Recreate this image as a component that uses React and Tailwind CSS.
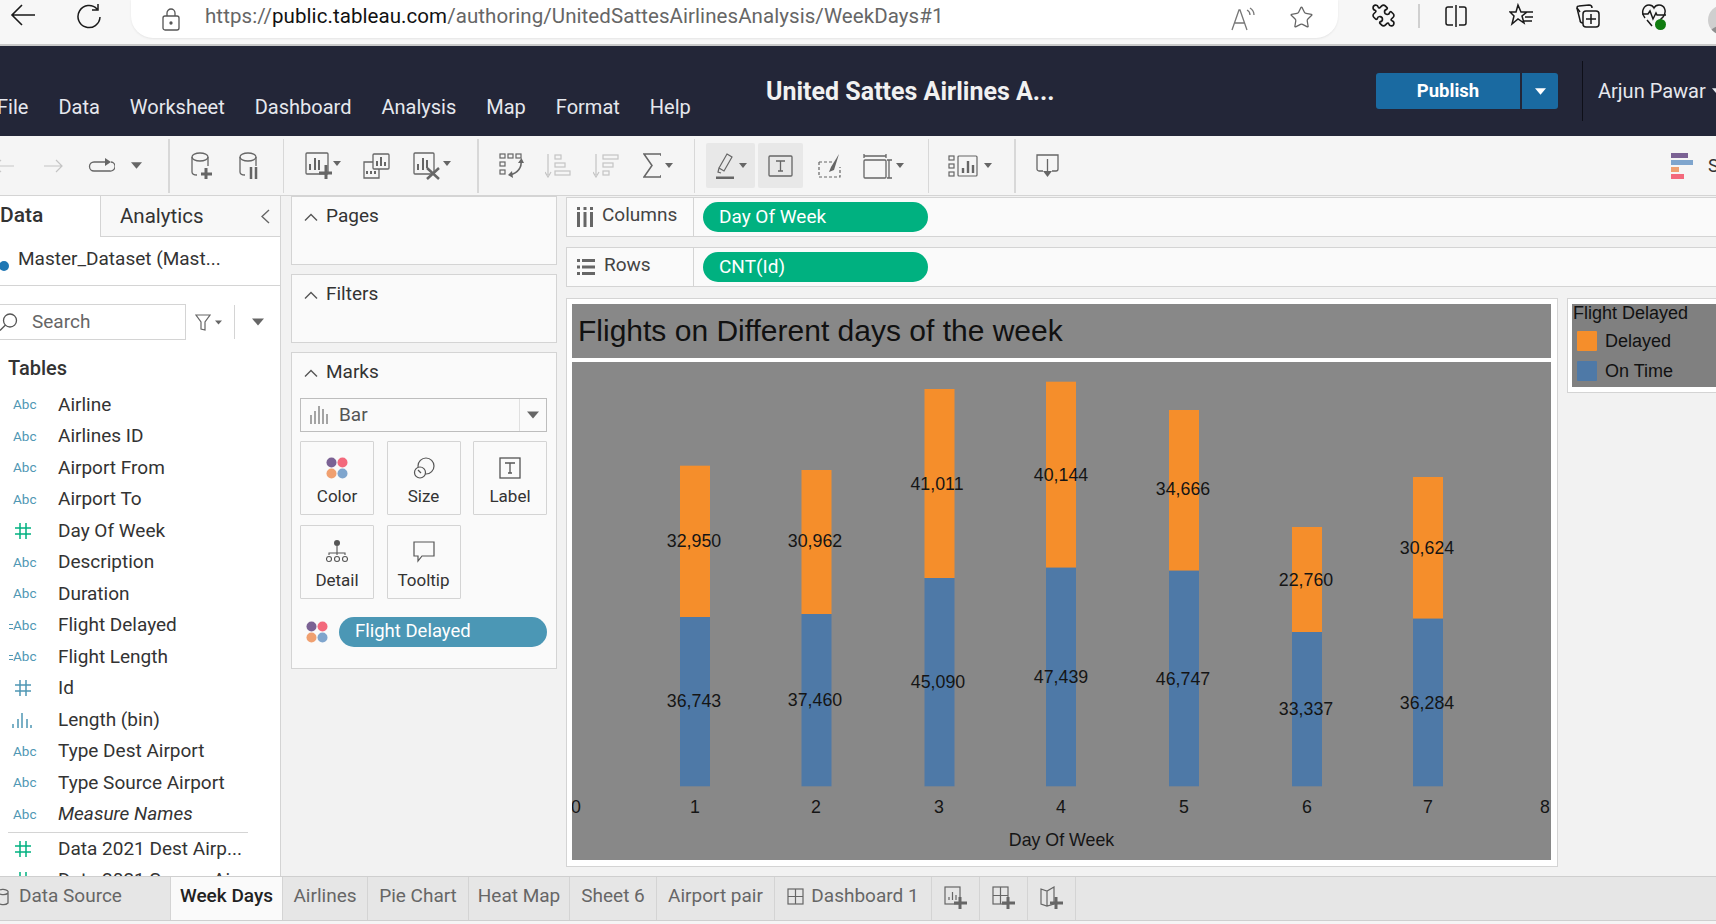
import React from "react";
import { Star, Puzzle } from "lucide-react";

const Ic = ({ w, h, className = "", children, sw = 1.5 }) => (
  <svg width={w} height={h} viewBox={`0 0 ${w} ${h}`} fill="none" stroke="currentColor" strokeWidth={sw} className={`shrink-0 ${className}`}>
    {children}
  </svg>
);
const Caret = ({ w = 9, h = 6, className = "" }) => (
  <svg width={w} height={h} viewBox="0 0 10 6" className={`shrink-0 ${className}`}><path d="M0 0h10L5 6z" fill="currentColor" /></svg>
);
const Dots = ({ size = 22 }) => (
  <svg width={size} height={size} viewBox="0 0 22 22" className="shrink-0">
    <circle cx="5.5" cy="5.5" r="5" fill="#7b6294" /><circle cx="16.5" cy="5.5" r="5" fill="#f3697c" />
    <circle cx="5.5" cy="16.5" r="5" fill="#f0a070" /><circle cx="16.5" cy="16.5" r="5" fill="#7fa5cd" />
  </svg>
);
const Sep = ({ className = "" }) => <div className={`h-[54px] bg-[#d8d8d8] shrink-0 ${className}`} />;

const Chevron = () => (
  <Ic w={14} h={8} sw={1.4} className="text-[#555]"><path d="M1 7.5 7 1.5l6 6" /></Ic>
);

const Hash = ({ color }) => (
  <svg width="16" height="16" viewBox="0 0 16 16" stroke={color} strokeWidth="1.5" className="ml-[15px]">
    <path d="M5 0v16M11 0v16M0 5h16M0 11h16" />
  </svg>
);
const Abc = ({ pre }) => (
  <div className="relative w-[36px] pl-[13px] text-[13.5px] text-[#4f97b4] leading-none">
    {pre && <span className="absolute left-[9px] top-[5px] w-[4px] h-[5px] border-y border-[#4f97b4]" />}
    Abc
  </div>
);
const BinIcon = () => (
  <svg width="20" height="16" viewBox="0 0 20 16" stroke="#4f97b4" strokeWidth="1.5" className="ml-[12px]">
    <path d="M1 16v-4M6 16V7M10 16V1M15 16V7M19 16v-3" />
  </svg>
);

const fields = [
  ["abc", "Airline"], ["abc", "Airlines ID"], ["abc", "Airport From"], ["abc", "Airport To"],
  ["hashg", "Day Of Week"], ["abc", "Description"], ["abc", "Duration"], ["pre", "Flight Delayed"],
  ["pre", "Flight Length"], ["hasht", "Id"], ["bin", "Length (bin)"], ["abc", "Type Dest Airport"],
  ["abc", "Type Source Airport"], ["abc", "Measure Names", true],
];

const FieldRow = ({ kind, name, italic }) => (
  <div className="flex items-center h-[31.5px] shrink-0">
    <div className="w-[58px] flex items-center shrink-0">
      {kind === "abc" && <Abc />}
      {kind === "pre" && <Abc pre />}
      {kind === "hashg" && <Hash color="#00b180" />}
      {kind === "hasht" && <Hash color="#4f97b4" />}
      {kind === "bin" && <BinIcon />}
    </div>
    <span className={`text-[19px] text-[#333] whitespace-nowrap ${italic ? "italic" : ""}`}>{name}</span>
  </div>
);

const MarkBtn = ({ label, icon }) => (
  <div className="w-[74px] flex flex-col items-center border border-[#d4d4d4] rounded-[1px] h-full">
    <div className="h-[42px] flex items-end justify-center pb-[5px]">{icon}</div>
    <div className="text-[17px] text-[#333] leading-[24px]">{label}</div>
  </div>
);

const Card = ({ title, className = "", children }) => (
  <div className={`border border-[#d4d4d4] bg-[#fafafa] ${className}`}>
    <div className="flex items-center h-[39px] pl-[12px] gap-[8px] text-[19px] text-[#333]">
      <Chevron /><span>{title}</span>
    </div>
    {children}
  </div>
);

const Shelf = ({ label, icon, pill, className = "" }) => (
  <div className={`flex items-center h-[40px] border border-r-0 border-[#d4d4d4] bg-[#fafafa] ${className}`}>
    <div className="w-[127px] h-full border-r border-[#d4d4d4] flex items-center pl-[10px] gap-[9px] text-[19px] text-[#444]">
      {icon}<span className="-mt-[3px]">{label}</span>
    </div>
    <div className="ml-[9px] w-[225px] h-[30px] rounded-full bg-[#00b180] text-white text-[19px] pl-[16px] flex items-center">{pill}</div>
  </div>
);

const bars = [
  { x: 680, w: 30, top: 465.7, split: 617, a: "32,950", ax: 694, ay: 541, b: "36,743", bx: 694, by: 701 },
  { x: 801.5, w: 30, top: 470, split: 614, a: "30,962", ax: 815, ay: 541, b: "37,460", bx: 815, by: 700 },
  { x: 924.5, w: 30, top: 389, split: 578, a: "41,011", ax: 937, ay: 484, b: "45,090", bx: 938, by: 682 },
  { x: 1046, w: 30, top: 381.7, split: 567.7, a: "40,144", ax: 1061, ay: 475, b: "47,439", bx: 1061, by: 677 },
  { x: 1169, w: 30, top: 410, split: 570.7, a: "34,666", ax: 1183, ay: 489, b: "46,747", bx: 1183, by: 679 },
  { x: 1292, w: 30, top: 527, split: 632, a: "22,760", ax: 1306, ay: 580, b: "33,337", bx: 1306, by: 709 },
  { x: 1413, w: 30, top: 477, split: 618.7, a: "30,624", ax: 1427, ay: 548, b: "36,284", bx: 1427, by: 703 },
];
const ticks = [[576, "0"], [695, "1"], [816, "2"], [939, "3"], [1061, "4"], [1184, "5"], [1307, "6"], [1428, "7"], [1545, "8"]];

const Chart = () => (
  <svg width="979" height="498" viewBox="572 362 979 498" className="bg-[#888888]" style={{ fontFamily: '"Liberation Sans", Arial, sans-serif' }}>
    {bars.map((b) => (
      <g key={b.a}>
        <rect x={b.x} y={b.top} width={b.w} height={b.split - b.top} fill="#f58e2b" />
        <rect x={b.x} y={b.split} width={b.w} height={786.3 - b.split} fill="#4e79a7" />
      </g>
    ))}
    <g fontSize="17.8" fill="#151515" textAnchor="middle" dominantBaseline="central">
      {bars.map((b) => (
        <React.Fragment key={b.a}>
          <text x={b.ax} y={b.ay}>{b.a}</text>
          <text x={b.bx} y={b.by}>{b.b}</text>
        </React.Fragment>
      ))}
      {ticks.map(([x, t]) => <text key={t} x={x} y={807}>{t}</text>)}
      <text x={1061.5} y={840}>Day Of Week</text>
    </g>
  </svg>
);

const tabs = [
  ["Airlines", "w-[85px]"], ["Pie Chart", "w-[101px]"], ["Heat Map", "w-[101px]"], ["Sheet 6", "w-[87px]"], ["Airport pair", "w-[118px]"],
];

export default function App() {
  return (
    <div className="w-[1716px] h-[924px] overflow-hidden flex flex-col bg-[#f2f2f2]" style={{ fontFamily: 'Roboto, "Noto Sans", sans-serif' }}>
      {/* Browser chrome */}
      <div className="h-[46px] shrink-0 bg-[#f7f7f7] border-b-2 border-[#c9c9c9] flex items-start text-[#1a1a1a] overflow-hidden">
        <Ic w={26} h={24} className="ml-[10px] mt-[3px]" sw={1.6}><path d="M25 12H2M12 2 2 12l10 10" /></Ic>
        <Ic w={26} h={26} className="ml-[40px] mt-[3px]" sw={1.5}><path d="M21 6a11 11 0 1 0 3 8M22 1v6h-6" /></Ic>
        <div className="ml-[29px] w-[1207px] shrink-0 h-[38px] bg-white rounded-b-[22px] flex items-center shadow-[0_1px_2px_#e5e5e5]">
          <Ic w={18} h={23} className="ml-[31px] text-[#555]" sw={1.3}>
            <rect x="1" y="8" width="16" height="14" rx="2" /><path d="M5 8V5a4 4 0 0 1 8 0v3" /><circle cx="9" cy="15" r="1" fill="currentColor" />
          </Ic>
          <div className="ml-[25px] text-[20.5px] tracking-[0.07px] text-[#666] whitespace-nowrap w-[740px] shrink-0 -mt-[6px]">
            https://<span className="text-[#111]">public.tableau.com</span>/authoring/UnitedSattesAirlinesAnalysis/WeekDays#1
          </div>
          <div className="ml-[286px] relative w-[24px] h-[24px] text-[#777]">
            <svg width="24" height="24" viewBox="0 0 24 24" fill="none" stroke="currentColor" strokeWidth="1.3">
              <path d="M1 23 8 3h1l7 20M4 16h10M16 3c2 1 3 3 3 5M19 1c3 2 4 4 4 7" />
            </svg>
          </div>
          <Star size={25} strokeWidth={1.2} className="ml-[34px] -mt-[3px] text-[#666]" />
        </div>
        <Puzzle size={25} strokeWidth={1.6} className="ml-[33px] mt-[3px] -scale-x-100 shrink-0" />
        <div className="ml-[22px] mt-[4px] w-[2px] h-[24px] bg-[#d0d0d0] shrink-0" />
        <Ic w={24} h={24} className="ml-[24px] mt-[4px]" sw={1.5}>
          <path d="M12 1v22M9 3H4a2 2 0 0 0-2 2v14a2 2 0 0 0 2 2h5M15 3h5a2 2 0 0 1 2 2v14a2 2 0 0 1-2 2h-5" />
        </Ic>
        <Ic w={25} h={26} className="ml-[41px] mt-[3px]" sw={1.5}>
          <path d="M9 2 12 9h6l-5 4 2 7-6-4-6 5 2-8-4-4h6zM17 9h7M16 14h8M15 18h8" />
        </Ic>
        <Ic w={25} h={26} className="ml-[41px] mt-[3px]" sw={1.5}>
          <path d="M5 9 2 5c0-1 0-2 2-2l10-1c2 0 3 1 3 3" />
          <rect x="8" y="8" width="16" height="16" rx="3" /><path d="M16 11v10M11 16h10M2 5l3 12c0 2 1 3 3 3" />
        </Ic>
        <div className="ml-[41px] mt-[3px] relative w-[26px] h-[28px] shrink-0">
          <Ic w={26} h={26} sw={1.5}>
            <path d="M4 15C-1 9 3 2 8 2c3 0 4 1 5 3 1-2 2-3 5-3 6 0 8 7 4 12l-3 3M1 11h6l2-3 3 8 3-6 1 2h9M6 17l5 6" />
          </Ic>
          <span className="absolute right-[1px] bottom-[1px] w-[11px] h-[11px] rounded-full bg-[#107c10]" />
        </div>
        <div className="ml-[41px] mt-[5px] w-[30px] h-[30px] rounded-full bg-[#cfcfcf] shrink-0 overflow-hidden">
          <div className="mt-[21px] w-[30px] h-[12px] rounded-t-full bg-[#8f8f8f]" />
        </div>
      </div>

      {/* Header */}
      <div className="h-[90px] shrink-0 bg-[#232638] flex text-white overflow-hidden">
        <div className="flex items-end pb-[14px] gap-[30px] text-[20px] text-[#e6e8ee] -ml-[3px] w-[767px] shrink-0">
          <span>File</span><span>Data</span><span>Worksheet</span><span>Dashboard</span><span>Analysis</span><span>Map</span><span>Format</span><span>Help</span>
        </div>
        <div className="ml-[2px] w-[610px] shrink-0 flex items-center text-[25px] font-bold text-[#f1f1f1] whitespace-nowrap mt-[1px]">United Sattes Airlines A...</div>
        <div className="flex items-center gap-[2px] h-[36px] mt-[27px] shrink-0">
          <div className="w-[144px] h-full bg-[#1a6aa1] rounded-l-[3px] flex items-center justify-center font-bold text-[18.5px] pt-[1px]">Publish</div>
          <div className="w-[36px] h-full bg-[#1a6aa1] rounded-r-[3px] flex items-center justify-center"><Caret w={11} h={7} /></div>
        </div>
        <div className="ml-[24px] mt-[15px] w-[1px] h-[60px] bg-[#0e0f18] shrink-0" />
        <div className="ml-[15px] h-full flex items-center text-[20px] text-[#e6e8ee] gap-[6px] whitespace-nowrap shrink-0">Arjun Pawar<Caret w={9} h={6} /></div>
      </div>

      {/* Toolbar */}
      <div className="h-[60px] shrink-0 bg-[#f5f5f5] border-b border-[#d4d4d4] flex items-center text-[#666] overflow-hidden">
        <Ic w={20} h={14} className="-ml-[6px] text-[#c8c8c8]" sw={1.2}><path d="M20 7H1M7 1 1 7l6 6" /></Ic>
        <Ic w={19} h={14} className="ml-[30px] text-[#c4c4c4]" sw={1.2}><path d="M0 7h18M12 1l6 6-6 6" /></Ic>
        <Ic w={27} h={16} className="ml-[25px]" sw={1.3}><path d="M17 4H6a4 4 0 0 0 0 9h16a4 4 0 0 0 1-9" /><path d="M17 0v8l6-4z" fill="currentColor" stroke="none" /></Ic>
        <Caret w={11} h={7} className="ml-[16px]" />
        <Sep className="ml-[26px] w-[2px]" />
        <Ic w={22} h={28} className="ml-[21px]" sw={1.3}>
          <ellipse cx="9" cy="5" rx="8" ry="4" /><path d="M1 5v15c0 2 2 3 5 3M17 5v9" />
          <path d="M15 16v11M10 22h11" strokeWidth="3" />
        </Ic>
        <Ic w={19} h={28} className="ml-[26px]" sw={1.3}>
          <ellipse cx="9" cy="5" rx="8" ry="4" /><path d="M1 5v15c0 2 2 3 5 3M17 5v9" />
          <path d="M12 15v12M17 15v12" strokeWidth="2.5" />
        </Ic>
        <Sep className="ml-[25px] w-[1px]" />
        <div className="ml-[21px] w-[36px] flex items-start shrink-0">
          <Ic w={27} h={28} sw={1.3}>
            <rect x="1" y="1" width="22" height="21" rx="1" /><path d="M5 18v-6M10 18V6M14 18V8" strokeWidth="2" />
            <path d="M21 13v14M14 21h13" strokeWidth="3" />
          </Ic>
          <Caret w={8} h={5} className="ml-[1px] mt-[9px]" />
        </div>
        <Ic w={27} h={26} className="ml-[22px]" sw={1.3}>
          <rect x="10" y="1" width="16" height="15" rx="1" fill="#f5f5f5" /><path d="M14 13V8M18 13V4M22 13V9" strokeWidth="2" />
          <path d="M10 9H1v16h15v-9" /><path d="M4 21v-3M8 21v-3M12 21v-3" strokeWidth="2" />
        </Ic>
        <div className="ml-[23px] w-[38px] flex items-start shrink-0">
          <Ic w={27} h={28} sw={1.3}>
            <rect x="1" y="1" width="20" height="21" rx="1" /><path d="M5 18v-6M10 18V6M14 16V8" strokeWidth="2" />
            <path d="M14 16l12 11M26 16 14 27" strokeWidth="2.5" />
          </Ic>
          <Caret w={8} h={5} className="ml-[3px] mt-[9px]" />
        </div>
        <Sep className="ml-[26px] w-[2px]" />
        <Ic w={25} h={26} className="ml-[20px]" sw={1.2}>
          <rect x="1" y="1" width="5" height="4" /><rect x="9" y="1" width="5" height="4" /><rect x="17" y="1" width="5" height="4" />
          <rect x="1" y="9" width="5" height="4" /><rect x="1" y="17" width="5" height="4" />
          <path d="M22 8c1 6-3 12-11 14" strokeWidth="1.6" />
          <path d="M19 10l3.500-5L25 10zM13 18l-4 4 5 3z" fill="currentColor" stroke="none" />
        </Ic>
        <Ic w={26} h={24} className="ml-[21px] text-[#c4c4c4]" sw={1.2}>
          <path d="M3 0v21M0 18l3 5 3-5" /><rect x="10" y="1" width="6" height="4" /><rect x="10" y="9" width="10" height="4" /><rect x="10" y="17" width="15" height="4" />
        </Ic>
        <Ic w={26} h={24} className="ml-[22px] text-[#c4c4c4]" sw={1.2}>
          <path d="M3 0v21M0 18l3 5 3-5" /><rect x="10" y="1" width="15" height="4" /><rect x="10" y="9" width="10" height="4" /><rect x="10" y="17" width="6" height="4" />
        </Ic>
        <div className="ml-[24px] w-[29px] flex items-center gap-[4px] shrink-0">
          <Ic w={18} h={25} sw={1.5}><path d="M18 3V1H1l8 11.500L1 24h17v-2" /></Ic>
          <Caret w={8} h={5} className="-ml-[0px]" />
        </div>
        <Sep className="ml-[22px] w-[1px]" />
        <div className="ml-[11px] w-[49px] h-[45px] shrink-0 bg-[#e8e8e8] rounded-[2px] flex items-center pl-[9px] gap-[5px]">
          <Ic w={19} h={26} sw={1.2}><path d="M12 1l5 3-8 14-5-3zM4 15l-1 4 3 1" /><path d="M1 25h18" strokeWidth="3" /></Ic>
          <Caret w={8} h={5} />
        </div>
        <div className="ml-[3px] w-[45px] h-[45px] shrink-0 bg-[#e8e8e8] rounded-[2px] flex items-center justify-center">
          <Ic w={25} h={22} sw={1.3}><rect x="1" y="1" width="23" height="20" rx="1" /><path d="M8 6h9M12.5 6v10M10 16h5" /></Ic>
        </div>
        <Ic w={23} h={25} className="ml-[15px]" sw={1.2}>
          <path d="M1 9h13M1 24h21V14M1 9v15" strokeDasharray="3 2" />
          <path d="M21 1 13 14l-2 5 5-2z" fill="currentColor" stroke="none" />
        </Ic>
        <div className="ml-[22px] w-[43px] flex items-center shrink-0">
          <Ic w={29} h={26} sw={1.3}>
            <path d="M1 1v4M23 1v4M1 3h22" /><rect x="1" y="7" width="22" height="18" rx="1" /><path d="M26 7v18M24 7h5M24 25h5" />
          </Ic>
          <Caret w={8} h={5} className="ml-[4px]" />
        </div>
        <Sep className="ml-[22px] w-[1px]" />
        <div className="ml-[19px] w-[44px] flex items-center shrink-0">
          <Ic w={30} h={22} sw={1.2}>
            <rect x="1" y="1" width="5" height="4" /><rect x="1" y="9" width="5" height="4" /><rect x="1" y="17" width="5" height="4" />
            <rect x="10" y="1" width="19" height="20" rx="1" /><path d="M15 18v-5M20 18V6M25 18v-8" strokeWidth="2.4" />
          </Ic>
          <Caret w={8} h={5} className="ml-[6px]" />
        </div>
        <Sep className="ml-[22px] w-[2px]" />
        <Ic w={23} h={24} className="ml-[20px]" sw={1.3}>
          <path d="M7 17H3a2 2 0 0 1-2-2V1h21v14a2 2 0 0 1-2 2h-4M11.5 5v13" /><path d="M7 17h9l-4.500 6z" fill="currentColor" stroke="none" />
        </Ic>
        <div className="ml-auto w-[45px] flex items-center gap-[14px] shrink-0">
          <div className="w-[23px] flex flex-col gap-[2px] shrink-0">
            <div className="w-[17px] h-[5px] bg-[#7b6294]" /><div className="w-[22px] h-[5px] bg-[#7fa5cd]" />
            <div className="w-[8px] h-[5px] bg-[#f0a070]" /><div className="w-[13px] h-[5px] bg-[#f3697c]" />
          </div>
          <span className="text-[18px] text-[#333]">S</span>
        </div>
      </div>

      {/* Body */}
      <div className="h-[680px] shrink-0 flex">
        {/* Sidebar */}
        <div className="w-[281px] shrink-0 bg-white border-r border-[#d4d4d4] flex flex-col overflow-hidden">
          <div className="h-[41px] shrink-0 flex">
            <div className="w-[100px] flex items-center text-[21px] font-medium text-[#333] -mt-[1px]">Data</div>
            <div className="flex-1 bg-[#f8f8f8] border-l border-b border-[#d4d4d4] flex items-center pl-[19px] text-[20.5px] text-[#333]">
              Analytics
              <Ic w={9} h={15} className="ml-auto mr-[10px] text-[#666]" sw={1.4}><path d="M8 1 1 7.500 8 14" /></Ic>
            </div>
          </div>
          <div className="h-[49px] shrink-0 border-b border-[#d4d4d4] flex items-center relative text-[19px] text-[#333] pl-[18px] pb-[3px] whitespace-nowrap">
            <span className="absolute -left-[1px] top-[24px] w-[10px] h-[10px] rounded-full bg-[#1f77b4]" />
            Master_Dataset (Mast...
          </div>
          <div className="mt-[18px] h-[36px] shrink-0 flex items-center">
            <div className="w-[186px] h-full border border-l-0 border-[#d4d4d4] flex items-center text-[19px] text-[#666]">
              <Ic w={18} h={18} className="text-[#555]" sw={1.3}><circle cx="10" cy="7.500" r="6.500" /><path d="M5.500 12 0 17.500" /></Ic>
              <span className="ml-[14px]">Search</span>
            </div>
            <Ic w={16} h={17} className="ml-[9px] text-[#666]" sw={1.2}><path d="M1 1h14L10 8v8l-4-1V8z" /></Ic>
            <Caret w={7} h={5} className="ml-[4px] text-[#666]" />
            <div className="ml-[12px] w-[1px] h-[34px] bg-[#d4d4d4] shrink-0" />
            <Caret w={12} h={8} className="ml-[17px] text-[#666]" />
          </div>
          <div className="mt-[14px] h-[28px] shrink-0 pl-[8px] text-[20px] font-medium text-[#333] leading-[28px]">Tables</div>
          <div className="mt-[7px] flex flex-col">
            {fields.map(([k, n, it]) => <FieldRow key={n} kind={k} name={n} italic={it} />)}
            <div className="mt-[2px] ml-[8px] w-[240px] h-[1px] bg-[#d4d4d4] shrink-0" />
            <FieldRow kind="hashg" name="Data 2021 Dest Airp..." />
            <FieldRow kind="hashg" name="Data 2021 Source Ai..." />
          </div>
        </div>

        {/* Cards column */}
        <div className="w-[285px] shrink-0 pl-[10px] pr-[9px] flex flex-col gap-[9px] pt-0">
          <Card title="Pages" className="h-[69px]" />
          <Card title="Filters" className="h-[69px]" />
          <Card title="Marks" className="h-[317px]">
            <div className="mt-[6px] ml-[8px] mr-[9px] h-[34px] border border-[#bdbdbd] bg-[#fafafa] flex items-center">
              <svg width="20" height="20" viewBox="0 0 20 20" stroke="#777" strokeWidth="1.3" className="ml-[9px]">
                <path d="M1 19v-9M5 19V6M9 19V1M13 19V4M17 19v-10" />
              </svg>
              <span className="ml-[9px] text-[19px] text-[#555] flex-1">Bar</span>
              <div className="w-[27px] h-full border-l border-[#e0e0e0] flex items-center justify-center"><Caret w={12} h={8} className="text-[#666]" /></div>
            </div>
            <div className="ml-[8px] mr-[9px] mt-[9px] h-[74px] flex gap-[12.5px]">
              <MarkBtn label="Color" icon={<Dots />} />
              <MarkBtn label="Size" icon={
                <Ic w={22} h={22} sw={1.2} className="text-[#555]"><circle cx="13" cy="9" r="8" /><circle cx="7" cy="15.500" r="5.500" fill="#fafafa" /><path d="M5 13l3 3" /></Ic>} />
              <MarkBtn label="Label" icon={
                <Ic w={22} h={22} sw={1.3} className="text-[#555]"><rect x="1" y="1" width="20" height="20" /><path d="M6 6h10M11 6v10M9 16h4" /></Ic>} />
            </div>
            <div className="ml-[8px] mr-[9px] mt-[10px] h-[74px] flex gap-[12.5px]">
              <MarkBtn label="Detail" icon={
                <Ic w={22} h={24} sw={1.1} className="text-[#555]">
                  <circle cx="11" cy="4" r="3" fill="currentColor" stroke="none" /><path d="M11 7v7M3 16v-2h16v2M11 14v2" />
                  <circle cx="3" cy="20" r="2.500" /><circle cx="11" cy="20" r="2.500" /><circle cx="19" cy="20" r="2.500" />
                </Ic>} />
              <MarkBtn label="Tooltip" icon={
                <Ic w={22} h={22} sw={1.2} className="text-[#555]"><path d="M1 1h20v14H9l-4 5v-5H1z" /></Ic>} />
            </div>
            <div className="mt-[18px] ml-[14px] mr-[9px] flex items-center gap-[11px]">
              <Dots />
              <div className="flex-1 h-[30px] rounded-full bg-[#4b97b5] text-white text-[18.5px] flex items-center pl-[16px]">Flight Delayed</div>
            </div>
          </Card>
        </div>

        {/* Main */}
        <div className="flex-1 min-w-0 flex flex-col pt-px">
          <Shelf label="Columns" pill="Day Of Week" icon={
            <svg width="16" height="20" viewBox="0 0 16 20" fill="#666" className="shrink-0"><path d="M0 0h3v3H0zM0 5h3v15H0zM6.500 0h3v3h-3zM6.500 5h3v15h-3zM13 0h3v3h-3zM13 5h3v15h-3z" /></svg>} />
          <Shelf label="Rows" pill="CNT(Id)" className="mt-[10px]" icon={
            <svg width="18" height="16" viewBox="0 0 18 16" fill="#666" className="shrink-0"><path d="M0 0h3v3H0zM5 0h13v3H5zM0 6.500h3v3H0zM5 6.500h13v3H5zM0 13h3v3H0zM5 13h13v3H5z" /></svg>} />
          <div className="mt-[11px] flex items-start gap-[9px]" style={{ fontFamily: '"Liberation Sans", Arial, sans-serif' }}>
            <div className="w-[992px] h-[569px] shrink-0 border border-[#d4d4d4] bg-white pl-[5px] pt-[5px] flex flex-col gap-[4px]">
              <div className="w-[979px] h-[54px] bg-[#888888] pl-[6px] pb-[2px] flex items-center text-[30px] text-[#111] whitespace-nowrap">Flights on Different days of the week</div>
              <Chart />
            </div>
            <div className="flex-1 h-[95px] border border-r-0 border-[#d4d4d4] bg-white pl-[4px] py-[5px]">
              <div className="h-full bg-[#808080] text-[18px] text-[#111]">
                <div className="h-[20px] leading-[19px] pl-[1px]">Flight Delayed</div>
                <div className="mt-[7px] flex items-center h-[20px] pl-[5px] gap-[8px]"><span className="w-[20px] h-[20px] rounded-[1px] bg-[#f58e2b]" />Delayed</div>
                <div className="mt-[10px] flex items-center h-[20px] pl-[5px] gap-[8px]"><span className="w-[20px] h-[20px] rounded-[1px] bg-[#4e79a7]" />On Time</div>
              </div>
            </div>
          </div>
        </div>
      </div>

      {/* Tabs */}
      <div className="h-[45px] shrink-0 bg-[#e6e6e6] border-t border-b border-[#cfcfcf] flex items-stretch text-[19px] text-[#666] whitespace-nowrap">
        <div className="w-[170px] shrink-0 flex items-center gap-[10px] pb-[4px]">
          <Ic w={9} h={18} sw={1.3} className="text-[#666]"><path d="M8 3c-3-2-7-2-8-1M8 3v12c-2 2-5 2-8 1M0 6c3 1 6 1 8-1" /></Ic>
          <span>Data Source</span>
        </div>
        <div className="w-[113px] shrink-0 bg-[#fafafa] border-x border-[#d4d4d4] flex items-center justify-center text-[#222] font-medium pb-[4px]">Week Days</div>
        {tabs.map(([t, w]) => (
          <div key={t} className={`${w} shrink-0 border-r border-[#d4d4d4] flex items-center justify-center pb-[4px]`}>{t}</div>
        ))}
        <div className="w-[157px] shrink-0 border-r border-[#d4d4d4] flex items-center justify-center gap-[7px] pb-[4px]">
          <Ic w={17} h={17} sw={1.2}><rect x="1" y="1" width="15" height="15" /><path d="M8.500 1v15M1 8.500h15" /></Ic>
          <span>Dashboard 1</span>
        </div>
        <div className="w-[48px] shrink-0 border-r border-[#d4d4d4] flex items-center justify-center pb-[2px]">
          <Ic w={23} h={24} sw={1.2}><rect x="1" y="1" width="15" height="17" /><path d="M5 14v-3M8.500 14V6M12 14V9" /><path d="M16 11v12M10 17h13" strokeWidth="3" /></Ic>
        </div>
        <div className="w-[48px] shrink-0 border-r border-[#d4d4d4] flex items-center justify-center pb-[2px]">
          <Ic w={23} h={24} sw={1.2}><rect x="1" y="1" width="15" height="17" /><path d="M8.500 1v17M1 9.500h15" /><path d="M16 11v12M10 17h13" strokeWidth="3" /></Ic>
        </div>
        <div className="w-[48px] shrink-0 border-r border-[#d4d4d4] flex items-center justify-center pb-[2px]">
          <Ic w={23} h={24} sw={1.2}><path d="M1 3l6 2 7-4v17l-7 2-6-2zM7 5v15" /><path d="M16 11v12M10 17h13" strokeWidth="3" /></Ic>
        </div>
      </div>
      <div className="flex-1 bg-[#f5f5f5]" />
    </div>
  );
}
